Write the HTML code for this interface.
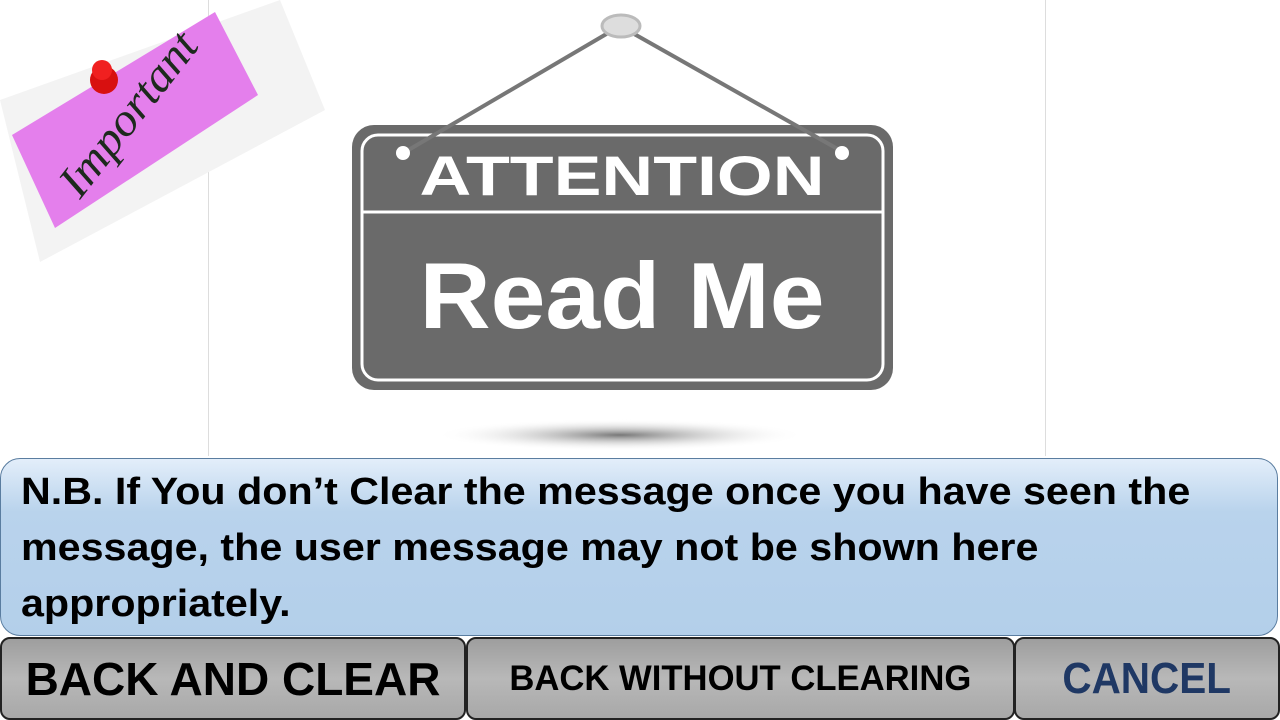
<!DOCTYPE html>
<html><head><style>
body{margin:0;width:1280px;height:720px;position:relative;background:#fff;overflow:hidden;font-family:"Liberation Sans",sans-serif}
.vl{position:absolute;top:0;height:456px;width:1px;background:#ddd}
.msg{position:absolute;left:0;top:458px;width:1278px;height:178px;border:1px solid #5a7da0;border-radius:20px;background:linear-gradient(#e3eefa,#b9d3ec 30%,#b3cfea);box-sizing:border-box}
.msg div{position:absolute;left:20px;font-weight:bold;font-size:38px;color:#000;white-space:nowrap;transform-origin:left center;transform:scaleX(1.085)}
.btn{position:absolute;top:637px;height:83px;border:2px solid #222;border-radius:10px;box-sizing:border-box;background:linear-gradient(#9e9e9e,#b8b8b8 50%,#a8a8a8);display:flex;align-items:center;justify-content:center;font-weight:bold;white-space:nowrap}
</style></head><body>
<div class="vl" style="left:208px"></div>
<div class="vl" style="left:1045px"></div>
<svg width="1280" height="460" style="position:absolute;left:0;top:0">
 <defs><radialGradient id="sh"><stop offset="0" stop-color="#777"/><stop offset="1" stop-color="#fff" stop-opacity="0"/></radialGradient></defs>
 <polygon points="0,100 280,0 325,110 40,262" fill="#f3f3f3"/>
 <polygon points="12,135 215,12 258,95 55,228" fill="#e47fec"/>
 <text x="0" y="0" transform="translate(80,200) rotate(-52)" font-family="Liberation Serif" font-size="46" fill="#1d2a1d" font-style="italic" textLength="195" lengthAdjust="spacingAndGlyphs">Important</text>
 <circle cx="104" cy="80" r="14" fill="#d81010"/><circle cx="102" cy="70" r="10" fill="#f02020"/>
 <ellipse cx="620" cy="435" rx="185" ry="16" fill="url(#sh)"/>
 <rect x="352" y="125" width="541" height="265" rx="22" fill="#6a6a6a"/>
 <rect x="362" y="135" width="521" height="245" rx="16" fill="none" stroke="#fff" stroke-width="3"/>
 <line x1="363" y1="212" x2="882" y2="212" stroke="#fff" stroke-width="3"/>
 <line x1="620" y1="26" x2="405" y2="152" stroke="#777" stroke-width="4"/>
 <line x1="620" y1="26" x2="843" y2="152" stroke="#777" stroke-width="4"/>
 <ellipse cx="621" cy="26" rx="19" ry="11" fill="#ddd" stroke="#bbb" stroke-width="3"/>
 <circle cx="403" cy="153" r="7" fill="#fff"/><circle cx="842" cy="153" r="7" fill="#fff"/>
 <text x="622" y="195" text-anchor="middle" font-size="56" font-weight="bold" fill="#fff" textLength="405" lengthAdjust="spacingAndGlyphs">ATTENTION</text>
 <text x="622" y="328" text-anchor="middle" font-size="94" font-weight="bold" fill="#fff" textLength="405" lengthAdjust="spacingAndGlyphs">Read Me</text>
</svg>
<div class="msg">
 <div style="top:12px">N.B. If You don’t Clear the message once you have seen the</div>
 <div style="top:68px">message, the user message may not be shown here</div>
 <div style="top:124px">appropriately.</div>
</div>
<div class="btn" style="left:0;width:466px;font-size:46px;"><span style="transform:scaleX(1.0);display:inline-block">BACK AND CLEAR</span></div>
<div class="btn" style="left:466px;width:549px;font-size:35px;"><span style="transform:scaleX(0.99);display:inline-block">BACK WITHOUT CLEARING</span></div>
<div class="btn" style="left:1014px;width:266px;font-size:44px;color:#1f3864"><span style="transform:scaleX(0.92);display:inline-block">CANCEL</span></div>
</body></html>
